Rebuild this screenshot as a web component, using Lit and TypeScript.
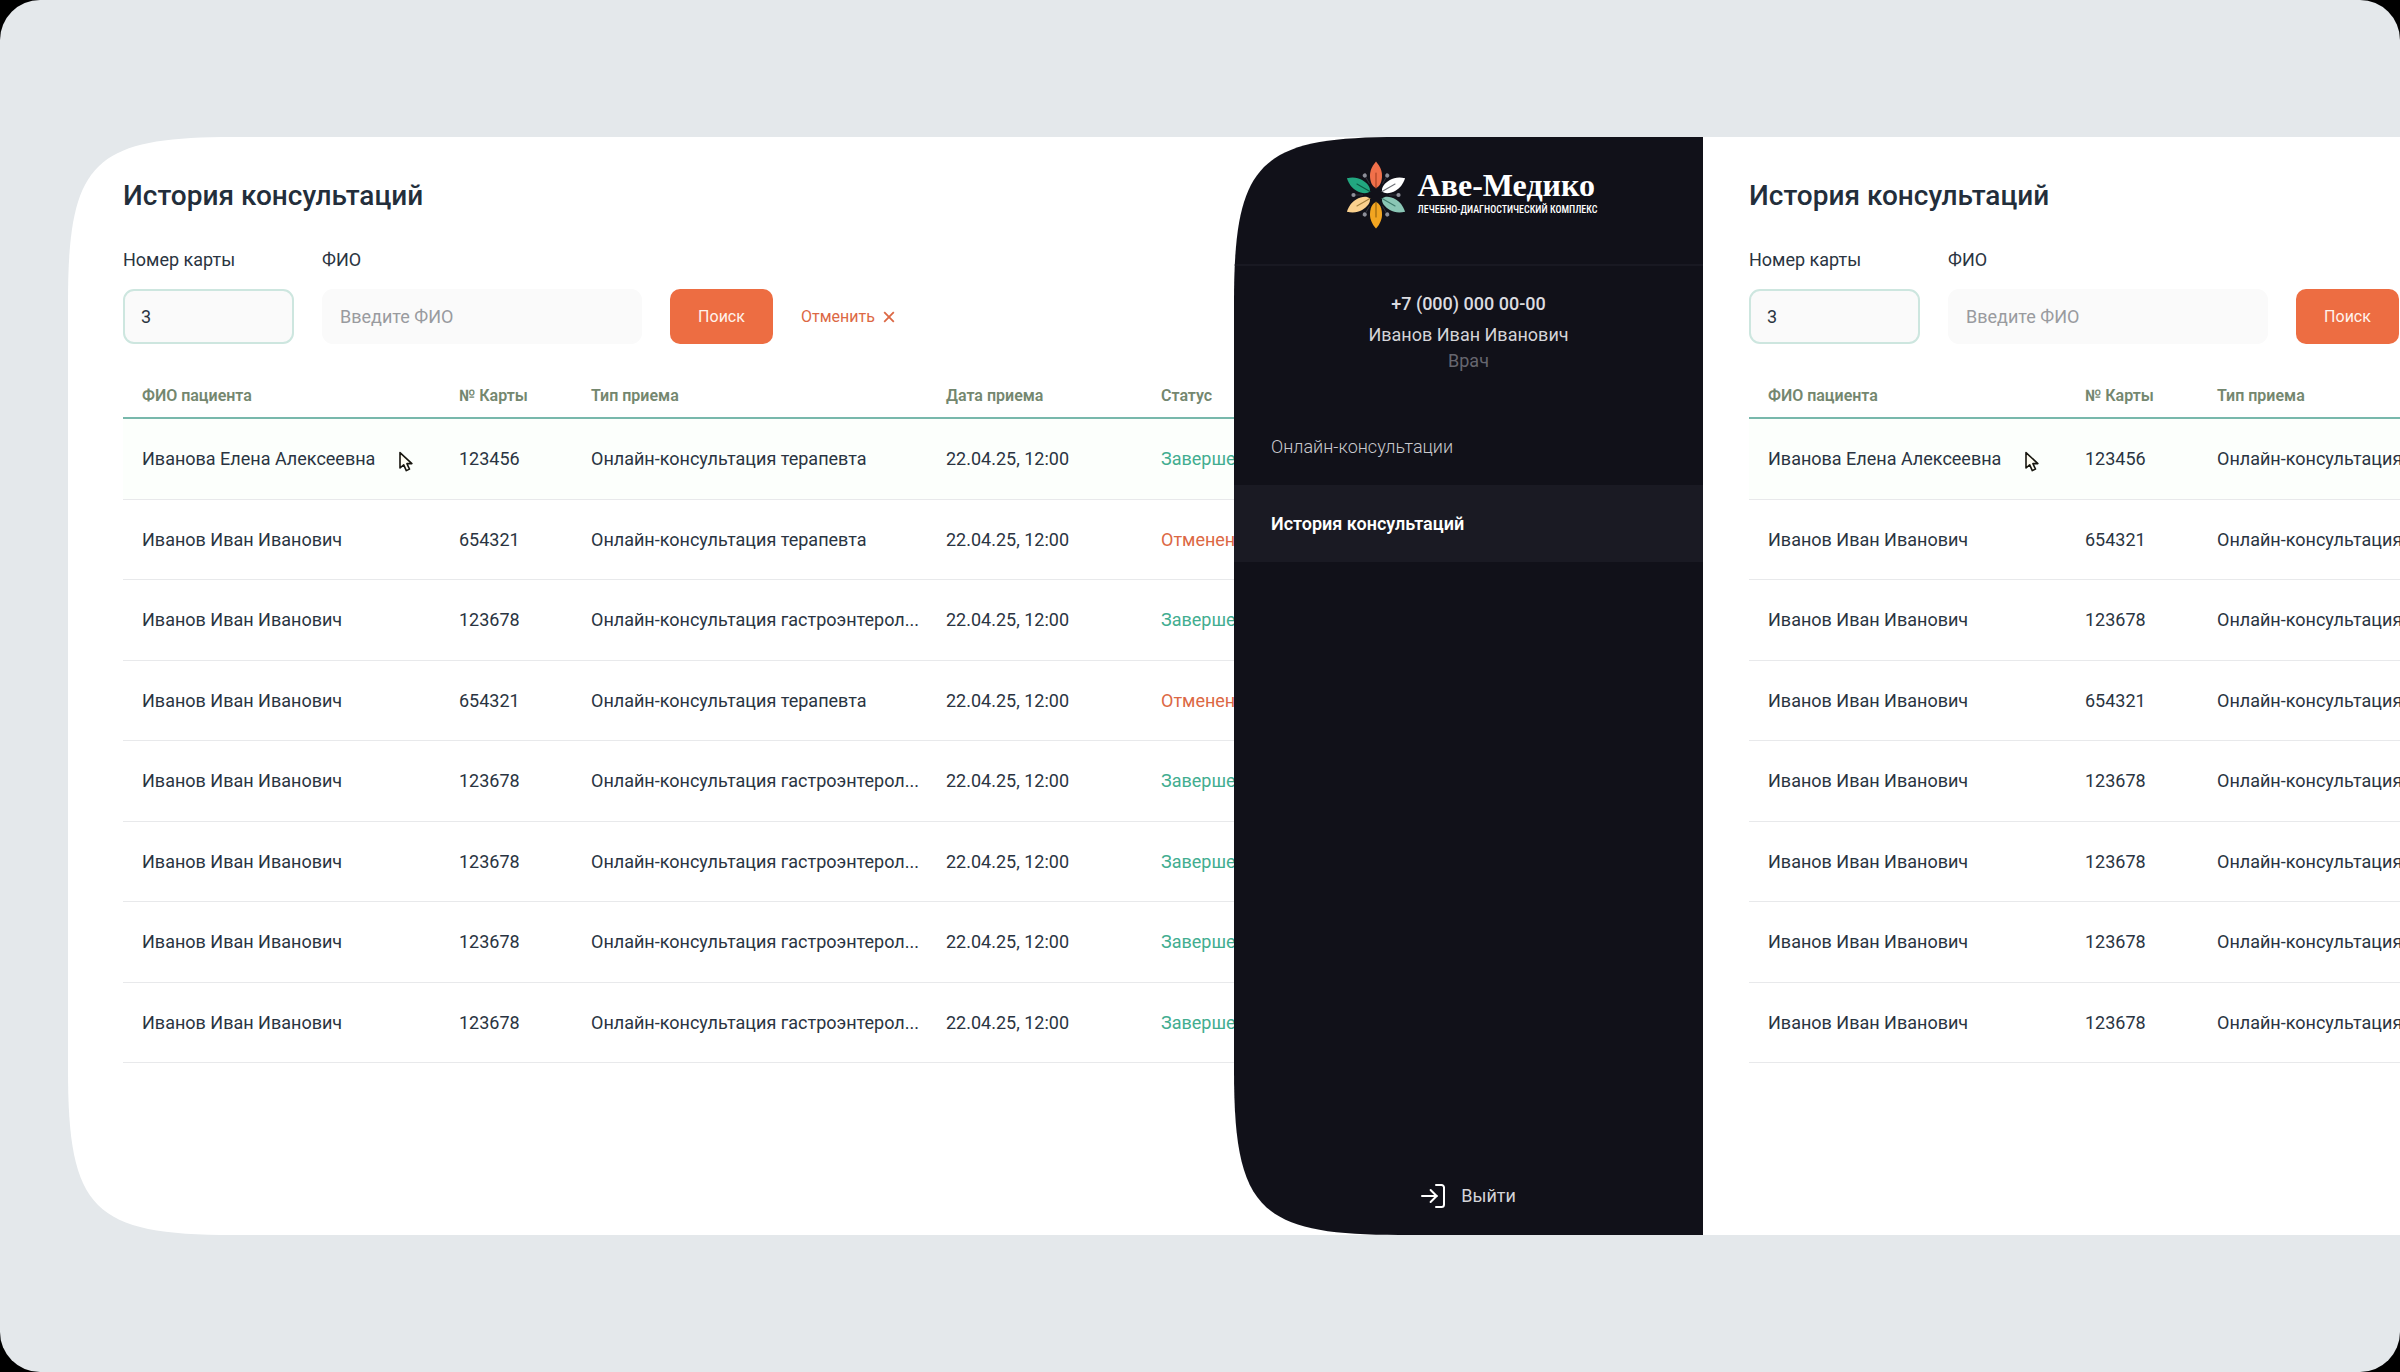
import { LitElement, html, css, svg, nothing } from "lit";
import { customElement } from "lit/decorators.js";
import { classMap } from "lit/directives/class-map.js";

type Visit = {
  name: string;
  card: string;
  kind: string;
  date: string;
  done: boolean;
};

const THERAPIST = "Онлайн-консультация терапевта";
const GASTRO = "Онлайн-консультация гастроэнтерол...";

const visit = (name: string, card: string, kind: string, done = true): Visit => ({
  name,
  card,
  kind,
  date: "22.04.25, 12:00",
  done,
});

const VISITS: Visit[] = [
  visit("Иванова Елена Алексеевна", "123456", THERAPIST),
  visit("Иванов Иван Иванович", "654321", THERAPIST, false),
  visit("Иванов Иван Иванович", "123678", GASTRO),
  visit("Иванов Иван Иванович", "654321", THERAPIST, false),
  visit("Иванов Иван Иванович", "123678", GASTRO),
  visit("Иванов Иван Иванович", "123678", GASTRO),
  visit("Иванов Иван Иванович", "123678", GASTRO),
  visit("Иванов Иван Иванович", "123678", GASTRO),
];

const PETALS = [
  { angle: 0, fill: "#f0704a", vein: "#a63f22" },
  { angle: 60, fill: "#ffffff", vein: "#6f7278" },
  { angle: 120, fill: "#8ac6b5", vein: "#3f7c6c" },
  { angle: 180, fill: "#f2a521", vein: "#94620c" },
  { angle: 240, fill: "#fbd18e", vein: "#a5813f" },
  { angle: 300, fill: "#22a780", vein: "#0b5a43" },
];

const reset = css`
  *,
  *::before,
  *::after {
    box-sizing: border-box;
  }
  button,
  input {
    font: inherit;
    margin: 0;
  }
`;

/* Smooth corners on the left side, square on the right. */
const smoothLeft = css`
  .smooth {
    border-radius: 110px 0 0 110px;
  }
  @supports (clip-path: shape(from 0px 0px, hline to 10px, close)) {
    .smooth {
      border-radius: 0;
      clip-path: shape(
        from 0px 165px,
        curve to 165px 0px with 0px 25px / 25px 0px,
        hline to 100%,
        vline to 100%,
        hline to 165px,
        curve to 0px calc(100% - 165px) with 25px 100% / 0px calc(100% - 25px),
        close
      );
    }
  }
`;

@customElement("history-panel")
export class HistoryPanel extends LitElement {
  static styles = [
    reset,
    css`
      :host {
        display: block;
        min-width: 0;
        overflow: hidden;
        color: #2a3441;
      }
      .title {
        margin: 0 0 33px;
        font-size: 28px;
        line-height: 36px;
        font-weight: 500;
        color: #232e3b;
      }
      .filters {
        display: flex;
        align-items: flex-end;
        gap: 28px;
        width: max-content;
        margin-bottom: 29px;
      }
      .field {
        display: flex;
        flex-direction: column;
        gap: 16px;
        width: 320px;
      }
      .narrow {
        width: 171px;
      }
      .label {
        line-height: 26px;
      }
      .input {
        width: 100%;
        height: 55px;
        padding: 0 16px;
        border: 2px solid #fafafa;
        border-radius: 11px;
        background: #fafafa;
        color: inherit;
        outline: none;
      }
      .active {
        border-color: #cde6df;
      }
      .input::placeholder {
        color: #999b9f;
        opacity: 1;
      }
      .search {
        width: 103px;
        height: 55px;
        border: 0;
        border-radius: 10px;
        background: #ed6d42;
        color: #fff3ec;
        font-size: 16px;
      }
      .cancel {
        display: flex;
        align-items: center;
        gap: 8px;
        height: 55px;
        padding: 0;
        border: 0;
        background: none;
        color: #dc6844;
        font-size: 16px;
      }
      .table {
        width: 1233px;
        height: 690px;
        table-layout: fixed;
        border-collapse: separate;
        border-spacing: 0;
      }
      .col-name {
        width: 317px;
      }
      .col-card {
        width: 132px;
      }
      .col-kind {
        width: 355px;
      }
      .col-date {
        width: 215px;
      }
      .th {
        height: 46px;
        padding: 0 0 0 19px;
        border-bottom: 2px solid #78b8ac;
        text-align: left;
        font-size: 16px;
        font-weight: 600;
        color: #74876f;
      }
      .td {
        padding: 0 0 0 19px;
        border-bottom: 1px solid #e8e9eb;
        white-space: nowrap;
      }
      .hovered .td {
        background: #fcfffc;
      }
      .who {
        position: relative;
      }
      .pointer {
        position: absolute;
        left: 275px;
        top: 32px;
      }
      .done {
        color: #42ad90;
      }
      .cancelled {
        color: #dc6844;
      }
    `,
  ];

  private row(v: Visit, hovered: boolean) {
    return html`<tr class=${classMap({ hovered })}>
      <td class="td who">
        ${v.name}${hovered
          ? html`<svg class="pointer" width="16" height="22" viewBox="0 0 16 22" aria-hidden="true">
              <path
                d="M2 1.6V17l3.7-3.2 2.6 5.8 3.2-1.5-2.6-5.5h5z"
                fill="#fffdf2"
                stroke="#17160f"
                stroke-width="1.6"
                stroke-linejoin="round"
              />
            </svg>`
          : nothing}
      </td>
      <td class="td">${v.card}</td>
      <td class="td">${v.kind}</td>
      <td class="td">${v.date}</td>
      <td class="td"><span class=${v.done ? "done" : "cancelled"}>${v.done ? "Завершена" : "Отменена"}</span></td>
    </tr>`;
  }

  render() {
    return html`
      <h1 class="title">История консультаций</h1>
      <form class="filters" @submit=${(e: Event) => e.preventDefault()}>
        <div class="field narrow">
          <label class="label" for="card">Номер карты</label>
          <input class="input active" id="card" type="text" .value=${"3"} />
        </div>
        <div class="field">
          <label class="label" for="name">ФИО</label>
          <input class="input" id="name" type="text" placeholder="Введите ФИО" />
        </div>
        <button class="search" type="submit">Поиск</button>
        <button class="cancel" type="reset">
          Отменить
          <svg width="12" height="12" viewBox="0 0 12 12" aria-hidden="true">
            <path d="M1.2 1.2l9.6 9.6M10.8 1.2L1.2 10.8" stroke="currentColor" stroke-width="1.8" />
          </svg>
        </button>
      </form>
      <table class="table">
        <colgroup>
          <col class="col-name" />
          <col class="col-card" />
          <col class="col-kind" />
          <col class="col-date" />
          <col />
        </colgroup>
        <thead>
          <tr>
            ${["ФИО пациента", "№ Карты", "Тип приема", "Дата приема", "Статус"].map(
              (t) => html`<th class="th" scope="col">${t}</th>`,
            )}
          </tr>
        </thead>
        <tbody>
          ${VISITS.map((v, i) => this.row(v, i === 0))}
        </tbody>
      </table>
    `;
  }
}

@customElement("side-menu")
export class SideMenu extends LitElement {
  static styles = [
    reset,
    smoothLeft,
    css`
      :host {
        display: flex;
      }
      .side {
        flex: 1;
        display: flex;
        flex-direction: column;
        background: #111119;
        color: #d4d4d8;
      }
      .brand {
        display: flex;
        justify-content: center;
        align-items: flex-start;
        gap: 12px;
        height: 129px;
        padding: 24px 0 0 6px;
        border-bottom: 2px solid #191922;
      }
      .words {
        display: flex;
        flex-direction: column;
        padding-top: 7px;
        color: #ffffff;
        white-space: nowrap;
      }
      .word {
        font-family: "Liberation Serif", serif;
        font-weight: 700;
        font-size: 32px;
        line-height: 34px;
      }
      .tagline {
        font-family: "Roboto Condensed", "Liberation Sans Narrow", Roboto, sans-serif;
        font-weight: 500;
        font-size: 10px;
        line-height: 16px;
      }
      .user {
        display: flex;
        flex-direction: column;
        align-items: center;
        padding: 25px 0 34px;
        line-height: 26px;
      }
      .phone {
        font-weight: 500;
        margin-bottom: 5px;
        color: #dcdce0;
      }
      .role {
        color: #66666f;
      }
      .item {
        display: flex;
        align-items: center;
        height: 77px;
        padding-left: 37px;
        color: #c9c9ce;
        font-weight: 300;
        text-decoration: none;
      }
      .current {
        background: #1a1a23;
        color: #ffffff;
        font-weight: 600;
      }
      .exit {
        display: flex;
        align-items: center;
        gap: 16px;
        margin: auto auto 26px;
        padding: 0;
        border: 0;
        background: none;
        color: #d4d4d8;
        line-height: 26px;
      }
    `,
  ];

  private flower() {
    return html`<svg width="60" height="68" viewBox="-30 -34 60 68" aria-hidden="true">
      ${PETALS.map(
        (p) => svg`<g transform="rotate(${p.angle})">
          <path d="M0-33.6C4.4-28.5 6-24 6-19.5C6-13.5 4-8.5 0-7C-4-8.5-6-13.5-6-19.5C-6-24-4.4-28.5 0-33.6Z" fill=${p.fill} />
          <path d="M0-7V-22" stroke=${p.vein} stroke-width="1.1" stroke-linecap="round" />
        </g>
        <g transform="rotate(${p.angle + 30})">
          <path d="M0-21V-13" stroke="#34353f" stroke-width="0.9" />
          <circle cy="-22.5" r="2.1" fill="#8d8f99" />
        </g>`,
      )}
    </svg>`;
  }

  render() {
    return html`<aside class="side smooth">
      <div class="brand">
        ${this.flower()}
        <div class="words">
          <span class="word">Аве-Медико</span>
          <span class="tagline">ЛЕЧЕБНО-ДИАГНОСТИЧЕСКИЙ КОМПЛЕКС</span>
        </div>
      </div>
      <div class="user">
        <span class="phone">+7 (000) 000 00-00</span>
        <span>Иванов Иван Иванович</span>
        <span class="role">Врач</span>
      </div>
      <nav>
        <a class="item" href="#online">Онлайн-консультации</a>
        <a class="item current" href="#history" aria-current="page">История консультаций</a>
      </nav>
      <button class="exit" type="button">
        <svg width="24" height="24" viewBox="0 0 24 24" fill="none" stroke="#ffffff" stroke-width="2" stroke-linecap="round" stroke-linejoin="round" aria-hidden="true">
          <path d="M1 12h15M9.6 6l6 6-6 6M15 1h5.5a2.5 2.5 0 0 1 2.5 2.5v17a2.5 2.5 0 0 1-2.5 2.5H15" />
        </svg>
        Выйти
      </button>
    </aside>`;
  }
}

@customElement("app-root")
export class AppRoot extends LitElement {
  static styles = [
    reset,
    smoothLeft,
    css`
      :host {
        display: block;
        background: #000000;
        font-family: Roboto, sans-serif;
        font-size: 18px;
      }
      .page {
        display: flex;
        min-height: 100vh;
        padding: 137px 0 137px 68px;
        border-radius: 40px;
        background: #e4e8eb;
        overflow: hidden;
      }
      .board {
        flex: 1;
        min-width: 0;
        display: grid;
        grid-template-columns: minmax(0, 1fr) minmax(0, 1fr);
        background: #ffffff;
      }
      .first {
        padding: 41px 0 0 55px;
      }
      .screen {
        display: grid;
        grid-template-columns: 469px minmax(0, 1fr);
      }
      .second {
        padding: 41px 0 0 46px;
      }
    `,
  ];

  render() {
    return html`<main class="page">
      <div class="board smooth">
        <history-panel class="first"></history-panel>
        <div class="screen">
          <side-menu></side-menu>
          <history-panel class="second"></history-panel>
        </div>
      </div>
    </main>`;
  }
}
